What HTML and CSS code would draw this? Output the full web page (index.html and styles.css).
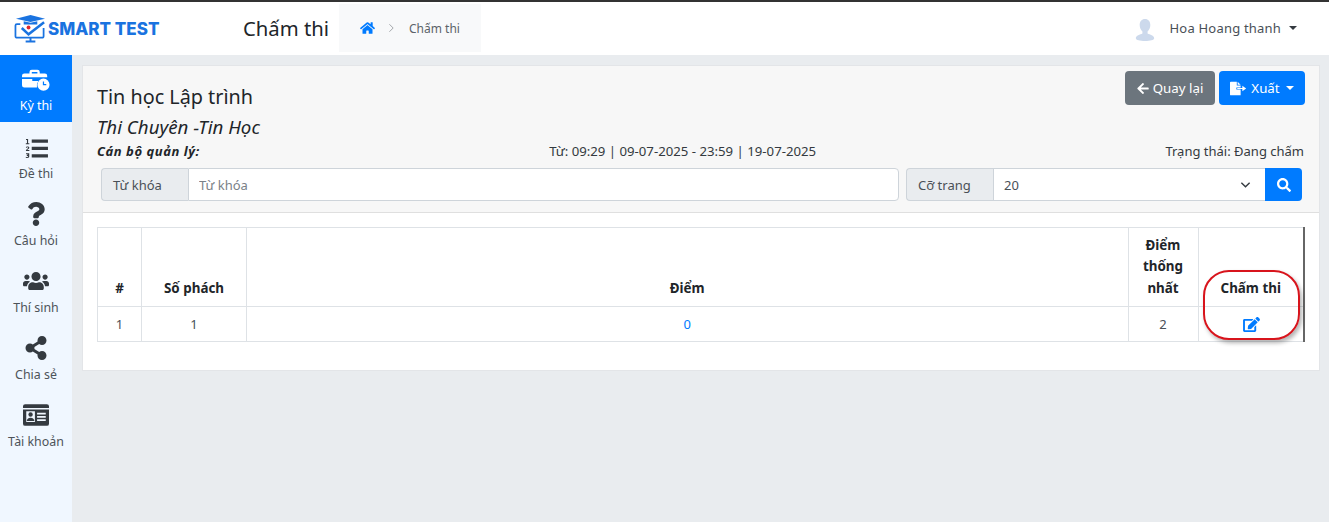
FILE: index.html
```html
<!DOCTYPE html>
<html lang="vi">
<head>
<meta charset="utf-8">
<title>Chấm thi</title>
<link rel="stylesheet" href="styles.css">
</head>
<body>
<header class="topbar">
  <div class="brand">
    <svg class="brand-logo" viewBox="0 0 34 30" aria-hidden="true">
      <path d="M2 5.500 17 1.500l15 4-15 3.200z" fill="#1a73e0"/>
      <path d="M10 8v3.500h14V8l-7 1.600z" fill="#1a73e0"/>
      <path d="M6.500 11H3a1.500 1.500 0 0 0-1.500 1.500v11A1.500 1.500 0 0 0 3 25h26a1.500 1.500 0 0 0 1.500-1.500V15" fill="none" stroke="#1a73e0" stroke-width="1.800"/>
      <path d="M8 15l7 6.500L31 9" fill="none" stroke="#1a73e0" stroke-width="2.600"/>
      <circle cx="15" cy="14.500" r="2" fill="#e0262c"/>
      <path d="M12 29h10M17 25v4" stroke="#1a73e0" stroke-width="2"/>
    </svg>
    <span class="brand-name">SMART TEST</span>
  </div>
  <h1 class="page-title">Chấm thi</h1>
  <nav class="crumbs">
    <svg class="crumb-home" viewBox="0 0 576 512" aria-hidden="true"><path d="M280.37 148.26L96 300.11V464a16 16 0 0 0 16 16l112.06-.29a16 16 0 0 0 15.92-16V368a16 16 0 0 1 16-16h64a16 16 0 0 1 16 16v95.64a16 16 0 0 0 16 16.05L464 480a16 16 0 0 0 16-16V300L295.67 148.26a12.19 12.19 0 0 0-15.3 0zM571.6 251.47L488 182.56V44.05a12 12 0 0 0-12-12h-56a12 12 0 0 0-12 12v72.61L318.47 43a48 48 0 0 0-61 0L4.34 251.47a12 12 0 0 0-1.6 16.9l25.5 31A12 12 0 0 0 45.15 301l235.22-193.74a12.19 12.19 0 0 1 15.3 0L530.9 301a12 12 0 0 0 16.9-1.6l25.5-31a12 12 0 0 0-1.7-16.93z"/></svg>
    <svg class="crumb-sep" viewBox="0 0 8 12" aria-hidden="true"><path d="M1.500 1.500 6 6l-4.500 4.500" fill="none" stroke="#a4a8ac" stroke-width="1.200"/></svg>
    <span class="crumb-text">Chấm thi</span>
  </nav>
  <div class="user">
    <svg class="avatar" viewBox="0 0 24 26" aria-hidden="true"><path d="M12 1c3.600 0 5.800 2.800 5.800 6.500 0 3-1.300 5.500-3 7v2.300c2.500 1.200 7.200 2.200 7.200 5.200 0 2-4.500 3-10 3S2 24 2 22c0-3 4.700-4 7.200-5.200v-2.300c-1.700-1.500-3-4-3-7C6.200 3.800 8.400 1 12 1z" fill="#ccd9ec"/></svg>
    <span class="user-name">Hoa Hoang thanh</span>
    <span class="caret caret-dark"></span>
  </div>
</header>

<div class="shell">
  <aside class="sidebar">
    <a class="side-item side-active">
      <svg class="side-icon" viewBox="0 0 30 24" aria-hidden="true">
        <path d="M8 5V3.500A2.500 2.500 0 0 1 10.500 1h6A2.500 2.500 0 0 1 19 3.500V5h5.500A2.500 2.500 0 0 1 27 7.500V9H0V7.500A2.500 2.500 0 0 1 2.500 5zm2.500 0h6V3.500h-6z" fill="currentColor"/>
        <path d="M0 11h11v2h6.500a9 9 0 0 0-1.500 7H2.500A2.500 2.500 0 0 1 0 17.500z" fill="currentColor"/>
        <circle cx="23" cy="17" r="6.500" fill="currentColor"/>
        <path d="M23 13.500V17h3" fill="none" stroke="#007bff" stroke-width="1.300"/>
      </svg>
      <span>Kỳ thi</span>
    </a>
    <a class="side-item">
      <svg class="side-icon side-icon-list" viewBox="0 0 24 22" aria-hidden="true">
        <path d="M7 1.500h17v3.500H7zM7 9.200h17v3.500H7zM7 17h17v3.500H7z" fill="currentColor"/>
        <path d="M1 1h2.200v4.500H4.500v1H.8v-1h1.200V2H1zM.8 9.500C1.200 8.600 4.500 8.400 4.500 10.200c0 1.200-1.800 1.700-2.200 2.500h2.200v1H.8c0-2 2.400-2.500 2.400-3.500 0-.6-1.200-.5-1.800.2zM1 16h3.400v3.500c0 1.500-2 2-3.600 1.200v-1c1 .5 2.300.5 2.300-.3 0-.5-.6-.6-1.300-.6v-.8l1.200-1H1z" fill="currentColor"/>
      </svg>
      <span>Đề thi</span>
    </a>
    <a class="side-item">
      <svg class="side-icon" viewBox="0 0 384 512" aria-hidden="true"><path fill="currentColor" d="M202.021 0C122.202 0 70.503 32.703 29.914 91.026c-7.363 10.58-5.093 25.086 5.178 32.874l43.138 32.709c10.373 7.865 25.132 6.026 33.253-4.148 25.049-31.381 43.63-49.449 82.757-49.449 30.764 0 68.816 19.799 68.816 49.631 0 22.552-18.617 34.134-48.993 51.164-35.423 19.86-82.299 44.576-82.299 106.405V320c0 13.255 10.745 24 24 24h72.471c13.255 0 24-10.745 24-24v-5.773c0-42.86 125.268-44.645 125.268-160.627C377.504 66.256 286.902 0 202.021 0zM192 373.459c-38.196 0-69.271 31.075-69.271 69.271 0 38.195 31.075 69.27 69.271 69.27s69.271-31.075 69.271-69.271-31.075-69.27-69.271-69.27z"/></svg>
      <span>Câu hỏi</span>
    </a>
    <a class="side-item">
      <svg class="side-icon" viewBox="0 0 640 512" aria-hidden="true"><path fill="currentColor" d="M96 224c35.3 0 64-28.7 64-64s-28.7-64-64-64-64 28.7-64 64 28.7 64 64 64zm448 0c35.3 0 64-28.7 64-64s-28.7-64-64-64-64 28.7-64 64 28.7 64 64 64zm32 32h-64c-17.6 0-33.5 7.1-45.1 18.6 40.3 22.1 68.9 62 75.1 109.4h66c17.7 0 32-14.3 32-32v-32c0-35.3-28.7-64-64-64zm-256 0c61.9 0 112-50.1 112-112S381.9 32 320 32 208 82.1 208 144s50.1 112 112 112zm76.8 32h-8.3c-20.8 10-43.9 16-68.5 16s-47.6-6-68.5-16h-8.3C179.6 288 128 339.6 128 403.2V432c0 26.5 21.5 48 48 48h288c26.5 0 48-21.5 48-48v-28.8c0-63.6-51.6-115.2-115.2-115.2zm-223.7-13.4C161.5 263.1 145.6 256 128 256H64c-35.3 0-64 28.7-64 64v32c0 17.7 14.3 32 32 32h65.9c6.3-47.4 34.9-87.3 75.2-109.4z"/></svg>
      <span>Thí sinh</span>
    </a>
    <a class="side-item">
      <svg class="side-icon" viewBox="0 0 448 512" aria-hidden="true"><path fill="currentColor" d="M352 320c-22.608 0-43.387 7.819-59.79 20.895l-102.486-64.054a96.551 96.551 0 0 0 0-41.683l102.486-64.054C308.613 184.181 329.392 192 352 192c53.019 0 96-42.981 96-96S405.019 0 352 0s-96 42.981-96 96c0 7.158.79 14.13 2.276 20.841L155.79 180.895C139.387 167.819 118.608 160 96 160c-53.019 0-96 42.981-96 96s42.981 96 96 96c22.608 0 43.387-7.819 59.79-20.895l102.486 64.054A96.301 96.301 0 0 0 256 416c0 53.019 42.981 96 96 96s96-42.981 96-96-42.981-96-96-96z"/></svg>
      <span>Chia sẻ</span>
    </a>
    <a class="side-item">
      <svg class="side-icon" viewBox="0 0 24 20" aria-hidden="true">
        <path fill="currentColor" fill-rule="evenodd" d="M2 0h20a2 2 0 0 1 2 2v16a2 2 0 0 1-2 2H2a2 2 0 0 1-2-2V2a2 2 0 0 1 2-2zM0 3.500v1.500h24V3.500zM3 6.500v10h8v-10zM13 8v1.500h8V8zm0 3v1.500h8V11zm0 3v1.500h8V14z"/>
        <circle cx="7" cy="9.500" r="2" fill="currentColor"/>
        <path fill="currentColor" d="M3.500 15.500c0-1.800 1.400-3 3.500-3s3.500 1.200 3.500 3z"/>
      </svg>
      <span>Tài khoản</span>
    </a>
  </aside>

  <main class="content">
    <section class="card">
      <div class="card-head">
        <div class="head-top">
          <div class="head-titles">
            <h2 class="exam-title">Tin học Lập trình</h2>
            <p class="exam-sub">Thi Chuyên -Tin Học</p>
          </div>
          <div class="head-actions">
            <button class="btn btn-gray">
              <svg class="btn-icon" viewBox="0 0 448 512" aria-hidden="true"><path fill="currentColor" d="M257.5 445.1l-22.2 22.2c-9.4 9.4-24.6 9.4-33.9 0L7 273c-9.4-9.4-9.4-24.6 0-33.9L201.4 44.7c9.4-9.4 24.6-9.4 33.9 0l22.2 22.2c9.5 9.5 9.3 25-.4 34.3L136.600 216H424c13.300 0 24 10.700 24 24v32c0 13.300-10.700 24-24 24H136.600l120.500 114.800c9.800 9.300 10 24.800.4 34.300z"/></svg>
              Quay lại
            </button>
            <button class="btn btn-blue">
              <svg class="btn-icon btn-icon-file" viewBox="0 0 20 16" aria-hidden="true"><path fill="currentColor" d="M1 0h7v4.500h4.500V6.800H7.500v2.400h5V16H1a1 1 0 0 1-1-1V1a1 1 0 0 1 1-1zM9 0l3.500 3.500H9zM8.500 7.300h6V4.800L19 8l-4.500 3.200V8.700h-6z"/></svg>
              Xuất
              <span class="caret caret-light"></span>
            </button>
          </div>
        </div>
        <div class="meta-row">
          <strong class="meta-manager">Cán bộ quản lý:</strong>
          <span class="meta-time">Từ: 09:29 | 09-07-2025 - 23:59 | 19-07-2025</span>
          <span class="meta-state">Trạng thái: Đang chấm</span>
        </div>
        <div class="filters">
          <div class="group group-key">
            <span class="addon">Từ khóa</span>
            <input class="field" type="text" placeholder="Từ khóa">
          </div>
          <div class="group group-size">
            <span class="addon">Cỡ trang</span>
            <div class="select">
              <span>20</span>
              <svg class="chev" viewBox="0 0 12 8" aria-hidden="true"><path d="M1.500 1.500 6 6l4.500-4.500" fill="none" stroke="#343a40" stroke-width="1.500"/></svg>
            </div>
            <button class="search-btn">
              <svg viewBox="0 0 512 512" aria-hidden="true"><path fill="currentColor" d="M505 442.7L405.3 343c-4.500-4.500-10.600-7-17-7H372c27.600-35.300 44-79.700 44-128C416 93.100 322.900 0 208 0S0 93.100 0 208s93.100 208 208 208c48.300 0 92.700-16.400 128-44v16.300c0 6.400 2.500 12.500 7 17l99.700 99.700c9.400 9.400 24.600 9.400 33.900 0l28.300-28.300c9.400-9.400 9.400-24.600.1-34zM208 336c-70.700 0-128-57.200-128-128 0-70.700 57.200-128 128-128 70.700 0 128 57.200 128 128 0 70.700-57.200 128-128 128z"/></svg>
            </button>
          </div>
        </div>
      </div>
      <div class="card-body">
        <div class="table-wrap">
          <table class="grid">
            <colgroup>
              <col class="c-num"><col class="c-code"><col><col class="c-agreed"><col class="c-action">
            </colgroup>
            <thead>
              <tr><th>#</th><th>Số phách</th><th>Điểm</th><th>Điểm thống nhất</th><th>Chấm thi</th></tr>
            </thead>
            <tbody>
              <tr>
                <td>1</td><td>1</td><td class="score">0</td><td>2</td>
                <td class="cell-edit">
                  <svg class="edit" viewBox="0 0 576 512" aria-hidden="true"><path fill="currentColor" d="M402.600 83.200l90.200 90.200c3.800 3.800 3.800 10 0 13.800L274.400 405.600l-92.800 10.300c-12.400 1.400-22.900-9.100-21.500-21.500l10.300-92.800L388.800 83.200c3.800-3.800 10-3.800 13.800 0zm162-22.900l-48.800-48.800c-15.200-15.200-39.900-15.200-55.200 0l-35.400 35.400c-3.800 3.800-3.800 10 0 13.800l90.200 90.200c3.800 3.800 10 3.800 13.800 0l35.400-35.400c15.200-15.300 15.200-40 0-55.200zM384 346.200V448H64V128h229.800c3.200 0 6.200-1.300 8.500-3.500l40-40c7.600-7.600 2.200-20.500-8.500-20.500H48C21.500 64 0 85.500 0 112v352c0 26.500 21.500 48 48 48h352c26.500 0 48-21.500 48-48V306.200c0-10.700-12.900-16-20.500-8.500l-40 40c-2.200 2.300-3.500 5.300-3.500 8.500z"/></svg>
                </td>
              </tr>
            </tbody>
          </table>
          <div class="callout"></div>
        </div>
      </div>
    </section>
  </main>
</div>
</body>
</html>
```

FILE: styles.css
```css
* { box-sizing: border-box; }
html, body { height: 100%; }
body {
  margin: 0;
  height: 522px;
  overflow: hidden;
  display: flex;
  flex-direction: column;
  font-family: "Noto Sans", "Open Sans", sans-serif;
  font-size: 13px;
  color: #343a40;
  background: #e9ecef;
}
.topbar {
  height: 55px;
  flex: none;
  border-top: 2px solid #333;
  background: #fff;
  display: flex;
  align-items: center;
  padding: 0 32px 1px 0;
}
.brand { width: 243px; display: flex; align-items: center; padding-left: 14px; gap: 1px; }
.brand-logo { width: 33px; height: 30px; }
.brand-name {
  font-family: "Inter", sans-serif;
  font-weight: 800;
  font-size: 17px;
  line-height: 1;
  padding-top: 2px;
  color: #1a73e0;
}
.page-title { margin: 0; width: 96px; font-size: 20.300px; font-weight: 400; color: #212529; }
.crumbs {
  width: 142px;
  height: 48px;
  background: #f8f9fa;
  display: flex;
  align-items: center;
  padding-left: 21px;
}
.crumb-home { width: 15px; height: 14px; fill: #007bff; }
.crumb-sep { width: 7px; height: 10px; margin-left: 13px; }
.crumb-text { margin-left: 14px; font-size: 12px; color: #5c6369; }
.user { margin-left: auto; display: flex; align-items: center; }
.avatar { width: 22px; height: 24px; margin-right: 14px; margin-top: 3px; }
.user-name { font-size: 13px; letter-spacing: .2px; color: #495057; }
.caret { display: inline-block; width: 0; height: 0; border-left: 4.500px solid transparent; border-right: 4.500px solid transparent; }
.caret-dark { margin-left: 8px; border-top: 4.500px solid #343a40; }
.caret-light { margin-left: 2px; border-top: 4.500px solid #fff; }

.shell { flex: 1; display: flex; min-height: 0; }
.sidebar { width: 72px; flex: none; background: #f0f7ff; }
.side-item {
  height: 67px;
  display: flex;
  flex-direction: column;
  align-items: center;
  justify-content: flex-end;
  padding-bottom: 7px;
  gap: 6px;
  font-size: 12.400px;
  color: #4d5359;
}
.side-item .side-icon { width: 26px; height: 24px; color: #343a40; }
.side-item .side-icon-list { width: 23px; height: 21px; margin-top: 3px; }
.side-active { background: #007bff; color: #fff; padding-bottom: 8px; gap: 5px; }
.side-active .side-icon { color: #fff; width: 28px; height: 24px; }

.content { flex: 1; padding: 10px 9px 0 10px; min-width: 0; }
.card {
  background: #fff;
  border: 1px solid #e3e5e8;
  height: 306px;
}
.card-head {
  background: #f7f7f7;
  border-bottom: 1px solid #dfdfdf;
  height: 147px;
  padding: 5px 14px 0 14px;
}
.head-top { display: flex; justify-content: space-between; }
.head-titles { padding-top: 13px; }
.exam-title { margin: 0; font-size: 19.800px; font-weight: 400; line-height: 26px; color: #212529; }
.exam-sub { margin: 5px 0 0; font-size: 18.700px; font-style: italic; line-height: 24px; color: #212529; }
.head-actions { display: flex; gap: 4px; }
.btn {
  height: 34px;
  border: 0;
  border-radius: 4px;
  font: inherit;
  font-size: 13.300px;
  color: #fff;
  display: flex;
  align-items: center;
  justify-content: center;
  gap: 4px;
}
.btn-gray { width: 90px; background: #6c757d; }
.btn-blue { width: 86px; background: #007bff; }
.btn-icon { width: 12px; height: 13px; }
.btn-icon-file { width: 17px; height: 15px; }
.meta-row {
  display: flex;
  justify-content: space-between;
  align-items: center;
  height: 20px;
  margin-top: 2px;
  padding-right: 1px;
  font-size: 13px;
  color: #343a40;
}
.meta-manager { font-style: italic; font-weight: 700; letter-spacing: .55px; color: #212529; }
.meta-time { font-size: 13.200px; white-space: nowrap; }
.filters { display: flex; gap: 7px; margin-top: 7px; padding-left: 4px; padding-right: 3px; }
.group { display: flex; height: 33px; }
.group-key { width: 798px; flex: none; }
.group-size { flex: 1; }
.addon {
  display: flex;
  align-items: center;
  padding: 0 11px;
  background: #e9ecef;
  border: 1px solid #ced4da;
  border-right: 0;
  border-radius: 4px 0 0 4px;
  font-size: 13px;
  color: #495057;
  white-space: nowrap;
}
.group-key .addon { width: 87px; }
.group-size .addon { width: 87px; }
.field {
  flex: 1;
  min-width: 0;
  border: 1px solid #ced4da;
  border-radius: 0 4px 4px 0;
  padding: 0 10px;
  font: inherit;
  font-size: 13px;
  background: #fff;
  outline: 0;
}
.field::placeholder { color: #7a8188; opacity: 1; }
.select {
  flex: 1;
  display: flex;
  align-items: center;
  justify-content: space-between;
  padding: 0 14px 0 10px;
  background: #fff;
  border: 1px solid #ced4da;
  border-right: 0;
  font-size: 13px;
  color: #495057;
}
.chev { width: 11px; height: 8px; }
.search-btn {
  width: 37px;
  border: 0;
  padding: 0;
  background: #007bff;
  color: #fff;
  border-radius: 0 4px 4px 0;
  display: flex;
  align-items: center;
  justify-content: center;
}
.search-btn svg { width: 14px; height: 14px; }

.card-body { padding: 14px 14px 0 14px; }
.table-wrap { position: relative; }
.grid {
  width: 100%;
  table-layout: fixed;
  border-collapse: collapse;
  font-size: 13px;
  color: #495057;
}
.c-num { width: 44px; }
.c-code { width: 105px; }
.c-agreed { width: 70px; }
.c-action { width: 106px; }
.grid th, .grid td { border: 1px solid #dee2e6; text-align: center; }
.grid th {
  height: 79px;
  vertical-align: bottom;
  padding: 0 8px 7px;
  font-weight: 700;
  font-size: 13.400px;
  line-height: 21.500px;
  color: #212529;
}
.grid td { height: 35px; padding: 0; }
.grid th:last-child, .grid td:last-child { border-right: 2px solid #666; }
.score { color: #007bff; }
.grid .cell-edit { padding-left: 2px; }
.edit { display: block; margin: 1px auto 0; width: 17px; height: 15px; color: #007bff; }
.callout {
  position: absolute;
  right: 5px;
  top: 43px;
  width: 97px;
  height: 70px;
  border: 2px solid #d8141c;
  border-radius: 26px;
  box-shadow: 2px 3px 4px rgba(0, 0, 0, .3);
}
```
